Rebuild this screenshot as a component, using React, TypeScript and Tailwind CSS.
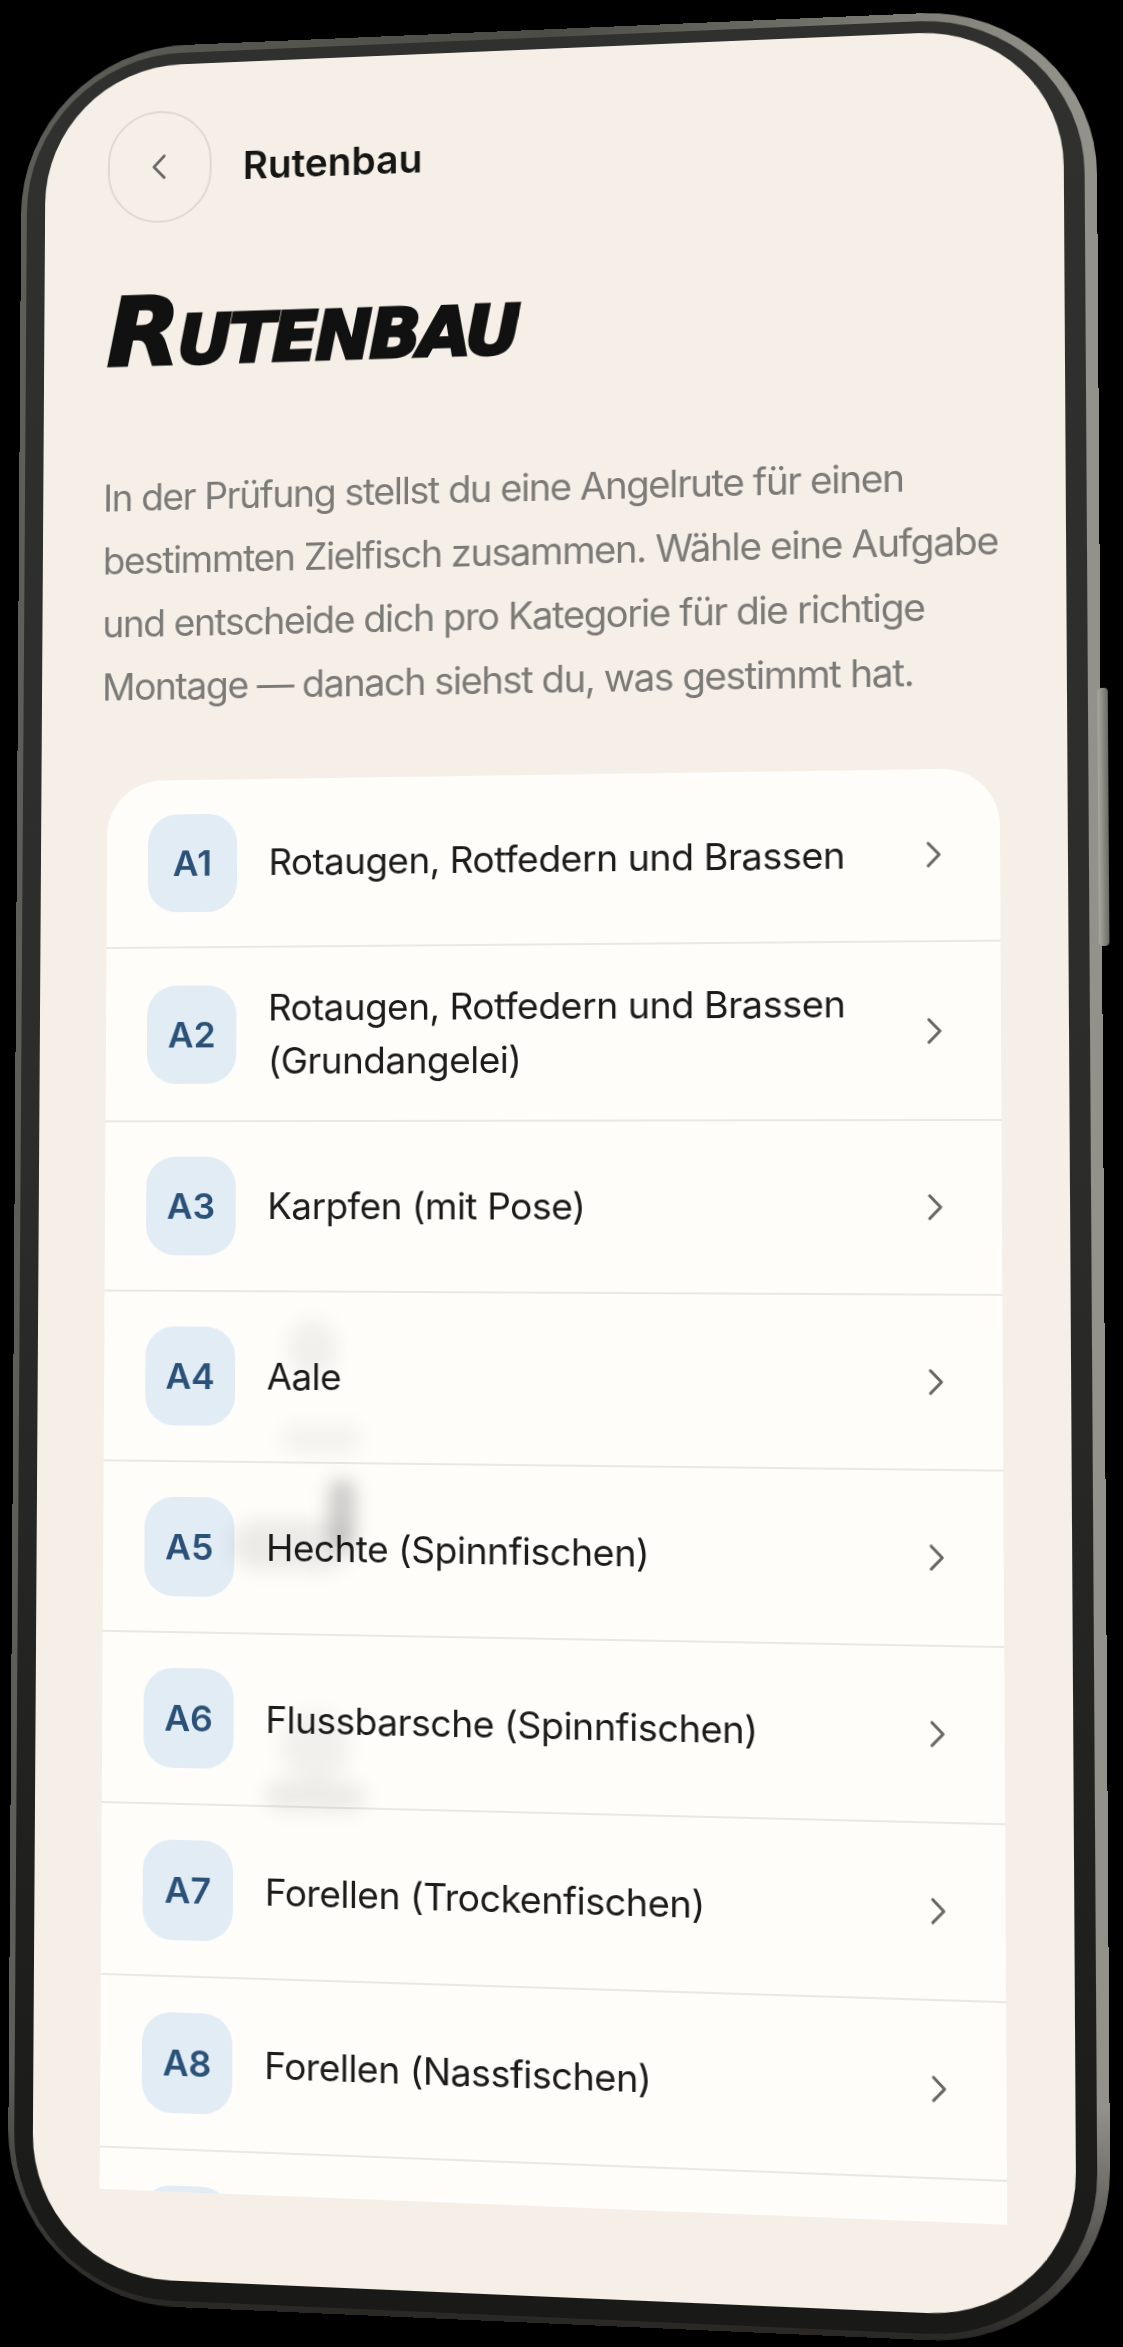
import { ReactNode } from 'react'

// screen corners in the photo: TL, TR, BR, BL
const quad = [
  [46, 70],
  [1063, 27],
  [1077, 2320],
  [32, 2275],
]
const SCREEN_W = 1020
const SCREEN_H = 2250
// rim + bezel on the top and left, the matrix is anchored on the screen corner
const ORIGIN_X = 25
const ORIGIN_Y = 20

const phoneMatrix = () => {
  const [[x0, y0], [x1, y1], [x2, y2], [x3, y3]] = quad.map(([x, y]) => [x - ORIGIN_X, y - ORIGIN_Y])
  const sx = x0 - x1 + x2 - x3
  const sy = y0 - y1 + y2 - y3
  const dx1 = x1 - x2
  const dx2 = x3 - x2
  const dy1 = y1 - y2
  const dy2 = y3 - y2
  const det = dx1 * dy2 - dx2 * dy1
  const g = (sx * dy2 - dx2 * sy) / det
  const h = (dx1 * sy - sx * dy1) / det
  const a = x1 - x0 + g * x1
  const b = x3 - x0 + h * x3
  const d = y1 - y0 + g * y1
  const e = y3 - y0 + h * y3
  return `matrix3d(${a / SCREEN_W},${d / SCREEN_W},0,${g / SCREEN_W},${b / SCREEN_H},${e / SCREEN_H},0,${h / SCREEN_H},0,0,1,0,${x0},${y0},0,1)`
}

const rows: { id: string; label: ReactNode; tall?: boolean }[] = [
  { id: 'A1', label: 'Rotaugen, Rotfedern und Brassen' },
  { id: 'A2', label: <>Rotaugen, Rotfedern und Brassen<br />(Grundangelei)</>, tall: true },
  { id: 'A3', label: 'Karpfen (mit Pose)' },
  { id: 'A4', label: 'Aale' },
  { id: 'A5', label: 'Hechte (Spinnfischen)' },
  { id: 'A6', label: 'Flussbarsche (Spinnfischen)' },
  { id: 'A7', label: 'Forellen (Trockenfischen)' },
  { id: 'A8', label: 'Forellen (Nassfischen)' },
  { id: '', label: '' },
]

// the soft grey smudges the video leaves over rows A4 to A7
const smudges = [
  'left-[186px] top-[548px] w-[50px] h-[60px] bg-black/5',
  'left-[180px] top-[653px] w-[80px] h-[30px] bg-black/4',
  'left-[228px] top-[708px] w-[26px] h-[70px] bg-black/20',
  'left-[130px] top-[750px] w-[120px] h-[50px] bg-black/7',
  'left-[180px] top-[940px] w-[70px] h-[70px] bg-black/5',
  'left-[165px] top-[1010px] w-[100px] h-[30px] bg-black/7',
]

const Chevron = ({ dir }: { dir: 'left' | 'right' }) => (
  <svg width="34" height="34" viewBox="0 0 24 24" fill="none" stroke="#666663" strokeWidth="2" strokeLinecap="round" strokeLinejoin="round" className="shrink-0">
    <path d={dir === 'left' ? 'M15 4 L7.5 12 L15 20' : 'M9 4 L16.5 12 L9 20'} />
  </svg>
)

const Row = ({ id, label, tall }: { id: string; label: ReactNode; tall?: boolean }) => (
  <div className={`flex items-center gap-[32px] pl-[42px] pr-[48px] border-b-2 border-[#e9e8e4] ${tall ? 'h-[177px]' : 'h-[172px]'}`}>
    <div className="w-[91px] h-[100px] shrink-0 rounded-[30px] bg-[#e1ecf5] flex items-center justify-center text-[36px] font-semibold text-[#2b5178]">
      {id}
    </div>
    <div className="flex-1 text-[37px] leading-[54px] tracking-[-0.5px] text-[#1b1b1a]">{label}</div>
    <Chevron dir="right" />
  </div>
)

export default function App() {
  return (
    <div className="w-[1123px] h-[2347px] bg-black overflow-hidden font-['Inter','Liberation_Sans',sans-serif]">
      <div
        className="relative w-fit origin-[25px_20px] rounded-[170px] pt-[8px] pr-[12px] pb-[6px] pl-[6px] bg-[linear-gradient(to_bottom,transparent_90%,#2a2825_100%),linear-gradient(to_right,#5e5e58,#4c4c47_50%,#92928a_97%)]"
        style={{ transform: phoneMatrix() }}
      >
        <div className="absolute right-[-7px] top-[682px] w-[10px] h-[255px] rounded-[4px] bg-gradient-to-r from-[#a9a9a0] to-[#6c6c66]" />
        <div className="rounded-[160px] pt-[12px] pr-[20px] pb-[20px] pl-[19px] bg-gradient-to-b from-[#30302e] via-[#2c2c2a] to-[#191917]">
          <div className="w-[1020px] h-[2250px] rounded-[140px] overflow-hidden bg-[#f5efe8] flex flex-col">
            <div className="h-[2162px] overflow-hidden pl-[62px] pr-[65px]">
              <div className="flex items-center gap-[32px] pt-[48px] ml-[3px]">
                <div className="w-[107px] h-[116px] rounded-full border-2 border-[#dcd8d2] flex items-center justify-center">
                  <Chevron dir="left" />
                </div>
                <div className="text-[39.5px] font-semibold text-[#161615] mt-[6px]">Rutenbau</div>
              </div>
              <h1 className="mt-[58px] ml-[3px] h-[110px] flex items-center text-[98px] font-bold italic text-[#111] tracking-[-3px] [font-variant:small-caps] [-webkit-text-stroke:3px_#111] font-['DejaVu_Sans',sans-serif]">
                Rutenbau
              </h1>
              <p className="mt-[84px] text-[38px] leading-[65px] tracking-[-1.4px] whitespace-nowrap text-[#7b7a76]">
                In der Prüfung stellst du eine Angelrute für einen
                <br />
                bestimmten Zielfisch zusammen. Wähle eine Aufgabe
                <br />
                und entscheide dich pro Kategorie für die richtige
                <br />
                Montage — danach siehst du, was gestimmt hat.
              </p>
              <div className="relative mt-[64px] ml-[6px] rounded-t-[56px] bg-[#fefdfa]">
                {rows.map((r) => (
                  <Row key={r.id} id={r.id} label={r.label} tall={r.tall} />
                ))}
                {smudges.map((s) => (
                  <div key={s} className={`absolute rounded-full blur-[9px] ${s}`} />
                ))}
              </div>
            </div>
          </div>
        </div>
      </div>
    </div>
  )
}
